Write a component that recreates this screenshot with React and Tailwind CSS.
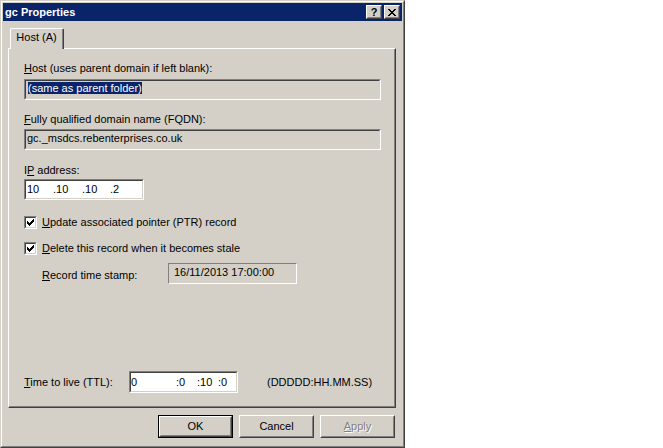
import React from "react";

// classic 3D pixel patterns
const CHECK = ["......#", ".....##", "#...###", "##.###.", "#####..", ".###...", "..#...."];
const XMARK = ["##....##", ".##..##.", "..####..", "...##...", "..####..", ".##..##.", "##....##"];

const Pixels = ({ rows, color = "#000" }) => (
  <svg width={rows[0].length} height={rows.length} shapeRendering="crispEdges">
    {rows.map((row, y) =>
      row.split("").map((c, x) =>
        c === "#" ? <rect key={`${x}-${y}`} x={x} y={y} width="1" height="1" fill={color} /> : null
      )
    )}
  </svg>
);

// 2px sunken edit frame
const Sunken = ({ className, bg, children }) => (
  <div className={`flex border border-t-[#808080] border-l-[#808080] border-r-white border-b-white ${className}`}>
    <div className={`flex-1 flex border border-t-[#404040] border-l-[#404040] border-r-[#d4d0c8] border-b-[#d4d0c8] ${bg}`}>
      {children}
    </div>
  </div>
);

const Raised = ({ className, children }) => (
  <div className={`flex border border-t-white border-l-white border-r-[#404040] border-b-[#404040] ${className}`}>
    <div className="flex-1 flex items-center justify-center border border-t-[#d4d0c8] border-l-[#d4d0c8] border-r-[#808080] border-b-[#808080]">
      {children}
    </div>
  </div>
);

const Checkbox = () => (
  <div className="w-[13px] h-[13px] flex border border-t-[#808080] border-l-[#808080] border-r-white border-b-white">
    <div className="flex-1 flex items-center justify-center bg-white border border-t-[#404040] border-l-[#404040] border-r-[#d4d0c8] border-b-[#d4d0c8]">
      <Pixels rows={CHECK} />
    </div>
  </div>
);

const App = () => {
  return (
    <div className="w-[663px] h-[448px] bg-white font-[Liberation_Sans,Arial,sans-serif] text-[11px] leading-[13px] text-black">
      <div className="w-[405px] h-[448px] flex border border-t-[#d4d0c8] border-l-[#d4d0c8] border-r-[#404040] border-b-[#404040]">
        <div className="flex-1 flex flex-col p-[1px] bg-[#d4d0c8] border border-t-white border-l-white border-r-[#808080] border-b-[#808080]">
          {/* title bar */}
          <div className="h-[18px] bg-[#0a246a] flex items-center pl-[2px] pr-[2px]">
            <span className="text-white font-bold">gc Properties</span>
            <div className="ml-auto flex gap-[2px]">
              <Raised className="w-[16px] h-[14px] bg-[#d4d0c8]">
                <span className="font-bold text-[11px] leading-[10px]">?</span>
              </Raised>
              <Raised className="w-[16px] h-[14px] bg-[#d4d0c8]">
                <Pixels rows={XMARK} />
              </Raised>
            </div>
          </div>

          {/* tab + panel */}
          <div className="pt-[7px] pl-[5px]">
            <div className="flex pl-[2px]">
              <div className="relative z-10 -mb-[1px] w-[54px] h-[21px] flex bg-[#d4d0c8] rounded-tl-[2px] rounded-tr-[2px] border-l border-t border-r border-l-white border-t-white border-r-[#404040]">
                <div className="flex-1 flex justify-center pt-[2px] border-r border-r-[#808080]">
                  Host (A)
                </div>
              </div>
            </div>
            <div className="w-[388px] h-[360px] flex border-l border-t border-r border-b border-l-white border-t-white border-r-[#404040] border-b-[#404040]">
              <div className="flex-1 flex flex-col pl-[15px] border-r border-b border-r-[#808080] border-b-[#808080]">
                <div className="mt-[13px]">
                  <u>H</u>ost (uses parent domain if left blank):
                </div>
                <Sunken className="mt-[4px] w-[357px] h-[21px]" bg="bg-[#d4d0c8]">
                  <div className="pl-[2px] pt-[1px]">
                    <span className="bg-[#0a246a] text-white">(same as parent folder)</span>
                  </div>
                </Sunken>

                <div className="mt-[13px]">
                  <u>F</u>ully qualified domain name (FQDN):
                </div>
                <Sunken className="mt-[3px] w-[357px] h-[21px]" bg="bg-[#d4d0c8]">
                  <div className="pl-[1px] pt-[1px]">gc._msdcs.rebenterprises.co.uk</div>
                </Sunken>

                <div className="mt-[14px]">
                  I<u>P</u> address:
                </div>
                <Sunken className="mt-[2px] w-[120px] h-[21px]" bg="bg-white">
                  <div className="flex items-center pl-[1px]">
                    <span className="w-[26px]">10</span>
                    <span className="w-[29px]">.10</span>
                    <span className="w-[28px]">.10</span>
                    <span>.2</span>
                  </div>
                </Sunken>

                <div className="mt-[16px] h-[13px] flex items-center">
                  <Checkbox />
                  <span className="ml-[5px]">
                    <u>U</u>pdate associated pointer (PTR) record
                  </span>
                </div>
                <div className="mt-[13px] h-[13px] flex items-center">
                  <Checkbox />
                  <span className="ml-[5px]">
                    <u>D</u>elete this record when it becomes stale
                  </span>
                </div>

                <div className="mt-[8px] h-[21px] flex pl-[18px]">
                  <div className="w-[126px] pt-[6px]">
                    <u>R</u>ecord time stamp:
                  </div>
                  <div className="w-[129px] h-[21px] pl-[5px] pt-[2px] border border-t-[#808080] border-l-[#808080] border-r-white border-b-white">
                    16/11/2013 17:00:00
                  </div>
                </div>

                <div className="mt-[87px] h-[22px] flex items-center">
                  <div className="w-[105px]">
                    <u>T</u>ime to live (TTL):
                  </div>
                  <Sunken className="w-[109px] h-[22px]" bg="bg-white">
                    <div className="flex items-center">
                      <span className="w-[45px]">0</span>
                      <span className="w-[21px]">:0</span>
                      <span className="w-[21px]">:10</span>
                      <span>:0</span>
                    </div>
                  </Sunken>
                  <div className="ml-[29px]">(DDDDD:HH.MM.SS)</div>
                </div>
              </div>
            </div>
          </div>

          {/* dialog buttons */}
          <div className="mt-[7px] flex justify-end gap-[6px] pr-[7px]">
            <div className="w-[75px] h-[23px] flex border border-black">
              <Raised className="flex-1">OK</Raised>
            </div>
            <Raised className="w-[75px] h-[23px]">Cancel</Raised>
            <Raised className="w-[75px] h-[23px]">
              <span className="text-[#808080] [text-shadow:1px_1px_0_#ffffff]">
                <u>A</u>pply
              </span>
            </Raised>
          </div>
        </div>
      </div>
    </div>
  );
};

export default App;
